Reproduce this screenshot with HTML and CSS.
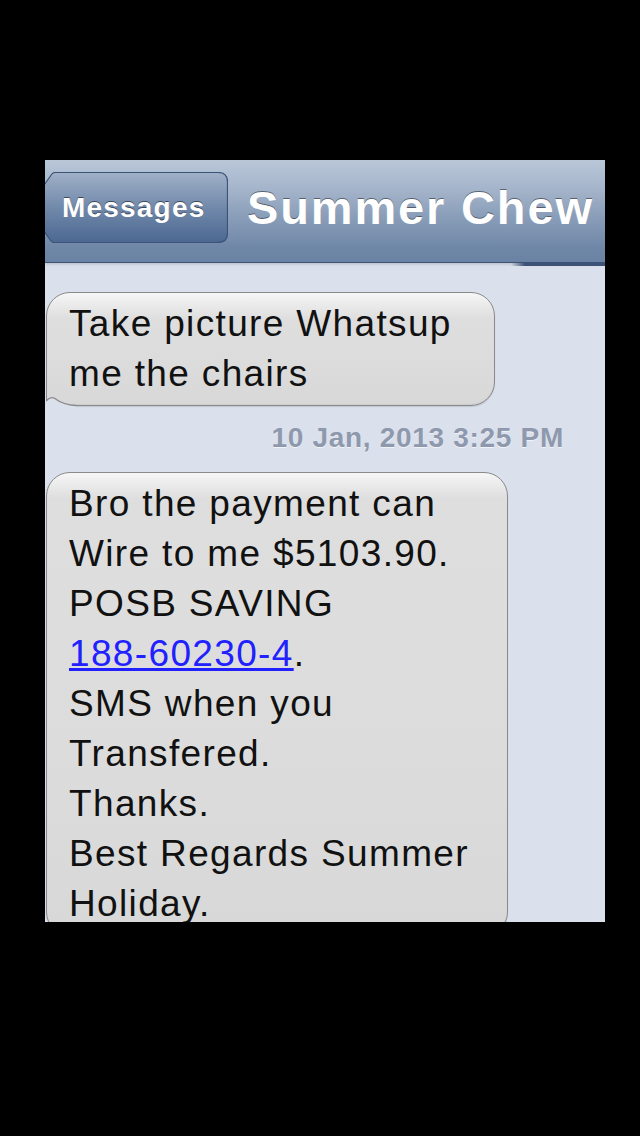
FILE: index.html
```html
<!DOCTYPE html>
<html lang="en">
<head>
    <meta charset="UTF-8">
    <meta name="viewport" content="width=device-width, initial-scale=1.0">
    <title>Summer Chew</title>
    <link rel="stylesheet" href="styles.css">
</head>
<body>
    <div class="screen">
        <div class="nav-bar">
            <a href="#" class="back-button">
                <svg class="back-shape" width="200" height="71" viewBox="0 0 200 71">
                    <defs>
                        <linearGradient id="back-fill" x1="0" y1="0" x2="0" y2="1">
                            <stop offset="0" stop-color="#a0b1c8"/>
                            <stop offset="0.5" stop-color="#7189aa"/>
                            <stop offset="1" stop-color="#4b6892"/>
                        </linearGradient>
                    </defs>
                    <path d="M27 0.5 H190 Q199.5 0.5 199.5 10 V61 Q199.5 70.5 190 70.5 H26 Q24 70.5 22.5 68.5 L2 38 Q0.5 35.5 2 33 L23.5 2.5 Q25 0.5 27 0.5 Z" fill="url(#back-fill)" stroke="#3d5376" stroke-width="1.2"/>
                </svg>
                <span>Messages</span>
            </a>
            <h1 class="title">Summer Chew</h1>
        </div>

        <div class="thread">
            <div class="bubble bubble-first">
                Take picture Whatsup<br>
                me the chairs
                <svg class="tail" width="30" height="14" viewBox="0 0 30 14">
                    <path d="M0 6 C3 3 6 2 8 3 C12 6 18 10 30 10.5 L30 14 L0 14 Z" fill="#dbe1ec"/>
                    <path d="M0 6 C3 3 6 2 8 3 C12 6 18 10 30 10.5" fill="none" stroke="#8a8a8a" stroke-width="1.3"/>
                </svg>
            </div>

            <div class="timestamp">10 Jan, 2013 3:25 PM</div>

            <div class="bubble bubble-long">
                Bro the payment can<br>
                Wire to me $5103.90.<br>
                POSB SAVING<br>
                <a href="#" class="phone-link">188-60230-4</a>.<br>
                SMS when you<br>
                Transfered.<br>
                Thanks.<br>
                Best Regards Summer<br>
                Holiday.
            </div>
        </div>
    </div>
</body>
</html>
```

FILE: styles.css
```css
body {
    margin: 0;
    background-color: #000;
    font-family: "Liberation Sans", Arial, Helvetica, sans-serif;
    padding: 160px 0 0 45px;
    height: 1136px;
    box-sizing: border-box;
}
.screen {
    width: 560px;
    height: 762px;
    overflow: hidden;
    background-color: #dbe1ec;
    display: flex;
    flex-direction: column;
}
.nav-bar {
    position: relative;
    flex-shrink: 0;
    height: 103px;
    border-bottom: 1px solid #3e5477;
    background: linear-gradient(#bac7d9 0%, #a3b3c9 30%, #8a9eb9 55%, #7088a8 85%, #6a82a3 100%);
    box-shadow: 0 1px 3px rgba(0, 0, 0, 0.18);
    display: flex;
    align-items: flex-start;
    gap: 19px;
    padding-top: 12px;
    box-sizing: border-box;
    z-index: 1;
}
.nav-bar::after {
    content: "";
    position: absolute;
    right: 0;
    bottom: -4px;
    width: 94px;
    height: 4px;
    background: linear-gradient(to right, rgba(60, 82, 119, 0), #3c5277 14px);
}
.back-button {
    position: relative;
    margin-left: -17px;
    width: 200px;
    height: 71px;
    padding: 0 0 0 34px;
    box-sizing: border-box;
    flex-shrink: 0;
    text-decoration: none;
    color: #fff;
    font-weight: bold;
    font-size: 28px;
    letter-spacing: 1.2px;
    line-height: 71px;
    text-shadow: 0 -1px 0 rgba(0, 0, 0, 0.5);
}
.back-shape {
    position: absolute;
    left: 0;
    top: 0;
}
.back-button span {
    position: relative;
}
.title {
    margin: 9px 0 0;
    color: #fff;
    font-size: 47px;
    font-weight: bold;
    letter-spacing: 1.85px;
    line-height: 53px;
    white-space: nowrap;
    text-shadow: 0 -1px 0 rgba(0, 0, 0, 0.45);
}
.thread {
    display: flex;
    flex-direction: column;
    align-items: flex-start;
    padding-top: 29px;
}
.bubble {
    position: relative;
    margin-left: 1px;
    box-sizing: border-box;
    padding: 6px 0 6px 22px;
    font-size: 37px;
    letter-spacing: 1.35px;
    line-height: 50px;
    color: #111;
    white-space: nowrap;
    border: 1px solid #8a8a8a;
    border-radius: 24px;
    background: linear-gradient(#f7f7f7 0, #ececec 10px, #dedede 26px, #dcdcdc 60%, #d8d8d8 100%);
    box-shadow: 0 1px 1px rgba(0, 0, 0, 0.12), inset 0 -1px 1px rgba(0, 0, 0, 0.06);
}
.bubble-first {
    width: 449px;
    border-bottom-left-radius: 0;
}
.bubble-long {
    width: 462px;
}
.tail {
    position: absolute;
    left: -1px;
    bottom: -4px;
}
.phone-link {
    color: #2121ff;
    text-decoration: underline;
}
.timestamp {
    align-self: stretch;
    text-align: right;
    padding-right: 41px;
    font-size: 28px;
    font-weight: bold;
    letter-spacing: 0.7px;
    line-height: 64px;
    margin-bottom: 2px;
    color: #8e99ad;
    text-shadow: 0 1px 0 rgba(255, 255, 255, 0.6);
}
```
